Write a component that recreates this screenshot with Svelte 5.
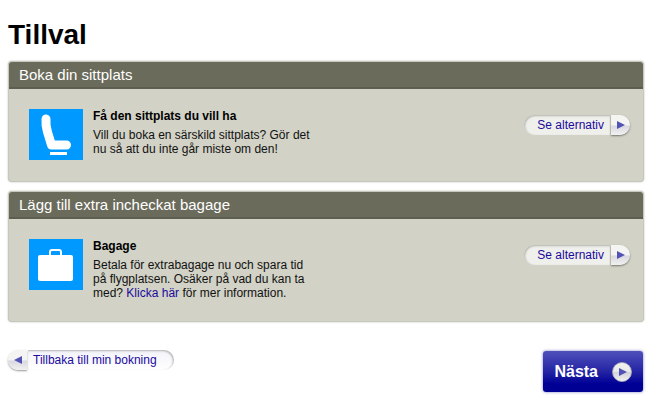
<script>
    let selected = $state('');

    function select(name) {
        selected = name;
    }
</script>

{#snippet arrow(left)}
    <svg class="arrow" viewBox="0 0 8 8" aria-hidden="true">
        <path d={left ? 'M8 0 0 4l8 4z' : 'M0 0l8 4-8 4z'}/>
    </svg>
{/snippet}

<main data-selected={selected}>
    <h1>Tillval</h1>

    <section class="seat">
        <h2>Boka din sittplats</h2>
        <div class="content">
            <svg class="picture" viewBox="0 0 54 51" aria-hidden="true">
                <rect width="54" height="51" fill="#0099ff"/>
                <path d="M17 10Q16.500 17 18.500 23L22.500 36H37.500" fill="none" stroke="#fff" stroke-width="9" stroke-linecap="round" stroke-linejoin="round"/>
                <path d="M21 43h17v3H21z" fill="#fff"/>
            </svg>
            <div class="text">
                <h3>Få den sittplats du vill ha</h3>
                <p>Vill du boka en särskild sittplats? Gör det nu så att du inte går miste om den!</p>
            </div>
            <button class="pill" onclick={() => select('seat')}>
                <span class="label">Se alternativ</span>
                <span class="cap">{@render arrow(false)}</span>
            </button>
        </div>
    </section>

    <section class="baggage">
        <h2>Lägg till extra incheckat bagage</h2>
        <div class="content">
            <svg class="picture" viewBox="0 0 54 51" aria-hidden="true">
                <rect width="54" height="51" fill="#0099ff"/>
                <rect x="9" y="16" width="35" height="26" rx="2" fill="#fff"/>
                <path d="M21 17v-4q0-2 2-2h7q2 0 2 2v4" fill="none" stroke="#fff" stroke-width="2"/>
            </svg>
            <div class="text">
                <h3>Bagage</h3>
                <p>Betala för extrabagage nu och spara tid på flygplatsen. Osäker på vad du kan ta med? <a href="#info">Klicka här</a> för mer information.</p>
            </div>
            <button class="pill" onclick={() => select('baggage')}>
                <span class="label">Se alternativ</span>
                <span class="cap">{@render arrow(false)}</span>
            </button>
        </div>
    </section>

    <footer>
        <a class="pill back" href="#booking">
            <span class="cap">{@render arrow(true)}</span>
            <span class="label">Tillbaka till min bokning</span>
        </a>
        <button class="next" onclick={() => select('next')}>
            Nästa
            <svg viewBox="0 0 20 20" aria-hidden="true">
                <defs>
                    <linearGradient id="disc" x1="0" y1="0" x2="0" y2="1">
                        <stop offset="0" stop-color="#f2f2f0"/>
                        <stop offset=".5" stop-color="#e8e8e8"/>
                        <stop offset=".52" stop-color="#d2d2d8"/>
                        <stop offset="1" stop-color="#f4f4f4"/>
                    </linearGradient>
                </defs>
                <circle cx="10" cy="10" r="9.500" fill="url(#disc)" stroke="#a9a9b8" stroke-width=".8"/>
                <path d="M7 6v8l8-4z" fill="#5353b5"/>
            </svg>
        </button>
    </footer>
</main>

<style>
    :global(body) {
        margin: 0;
        background: #fff;
    }

    main {
        padding: 19px 19px 14px 9px;
        font-family: "Liberation Sans", Arial, sans-serif;
        font-size: 12px;
        line-height: 14px;
        color: #111;
    }

    h1, h2, h3, p {
        margin: 0;
    }

    h1 {
        margin: 0 0 11px -1px;
        font-size: 28px;
        line-height: 32px;
        color: #000;
    }

    section {
        display: flex;
        flex-direction: column;
        margin-bottom: 11px;
        background: #d2d2c6;
        border-radius: 3px;
        box-shadow: 0 0 0 1px #c6c8bd, 0 0 2px 1px #b5b8ad;
    }

    .seat {
        min-height: 119px;
    }

    .baggage {
        min-height: 129px;
    }

    h2 {
        padding: 4px 10px;
        border-bottom: 2px solid #5d5e50;
        border-radius: 3px 3px 0 0;
        background: #6a6b5b;
        font-size: 15px;
        font-weight: normal;
        line-height: 17px;
        color: #fff;
    }

    .content {
        display: flex;
        align-items: flex-start;
        padding: 20px 13px 20px 20px;
    }

    .picture {
        flex: none;
        width: 54px;
        height: 51px;
        margin-right: 10px;
    }

    .text {
        width: 224px;
    }

    h3 {
        margin-bottom: 5px;
        font-size: 12px;
        line-height: 14px;
        color: #000;
    }

    a {
        color: #1a0a9c;
        text-decoration: none;
    }

    button {
        border: 0;
        font-family: inherit;
        cursor: pointer;
    }

    .pill {
        display: flex;
        height: 20px;
        padding: 0;
        border-radius: 10px;
        background: none;
        font-size: 12px;
        line-height: 20px;
        color: #1a0a9c;
    }

    .content .pill {
        margin: 6px 0 0 auto;
    }

    .label {
        padding: 0 6px 0 13px;
        border-radius: 10px 0 0 10px;
        background: #efefeb;
        box-shadow: inset 1px 1px 2px #b4b4ae;
    }

    .cap {
        display: flex;
        align-items: center;
        justify-content: center;
        width: 19px;
        margin-left: 1px;
        border-radius: 0 10px 10px 0;
        background: linear-gradient(#f4f4f2 50%, #d8d8e0 55%, #f2f2f2);
        box-shadow: 0 1px 2px #77776f;
    }

    .arrow {
        flex: none;
        width: 8px;
        height: 8px;
        fill: #5353b5;
    }

    .back {
        margin-left: -1px;
    }

    .back .label {
        padding: 0 17px 0 5px;
        border-radius: 0 10px 10px 0;
        background: linear-gradient(#f2f2fa, #fff);
        box-shadow: inset -1px 1px 2px #b4b4b4;
    }

    .back .cap {
        margin: 0 1px 0 0;
        border-radius: 10px 0 0 10px;
        box-shadow: 0 1px 2px #999;
    }

    footer {
        display: flex;
        justify-content: space-between;
        align-items: flex-start;
        padding-top: 18px;
    }

    .next {
        display: flex;
        align-items: center;
        gap: 14px;
        height: 41px;
        margin-top: 1px;
        padding: 0 11px;
        border-radius: 3px;
        background: linear-gradient(#5050bb, #2424a4 50%, #000096 80%, #000092);
        box-shadow: 0 0 3px #7777c0;
        font-size: 16px;
        font-weight: bold;
        color: #fff;
    }

    .next svg {
        width: 20px;
        height: 20px;
    }
</style>
